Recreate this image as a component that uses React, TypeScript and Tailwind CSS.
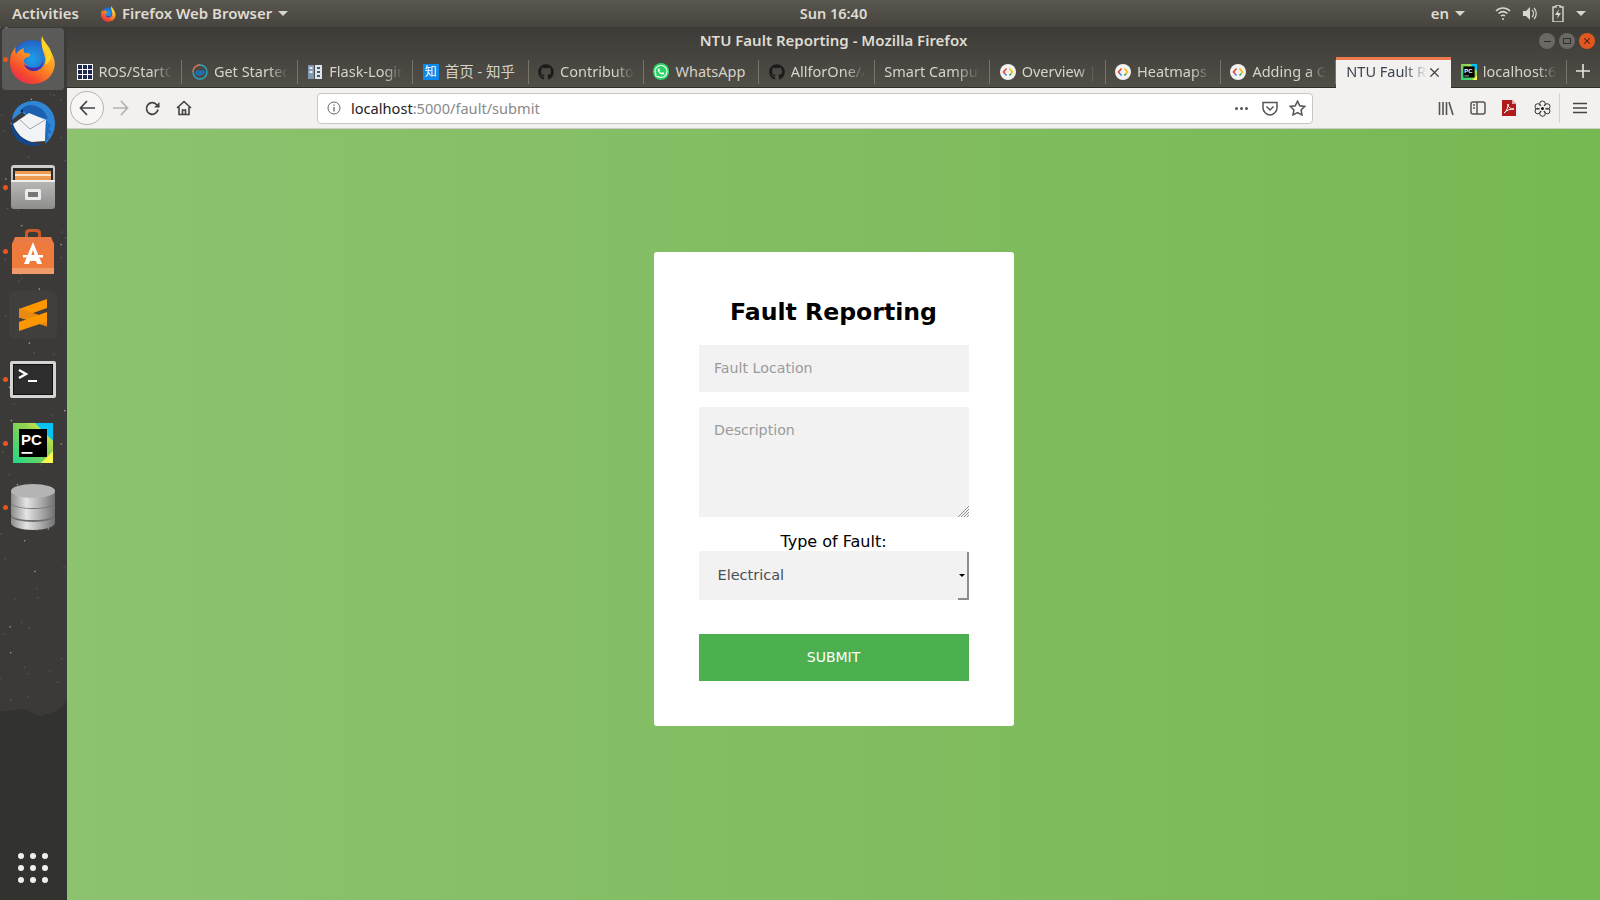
import { X } from "lucide-react";
import type { ReactNode } from "react";
import { FaGithub, FaWhatsapp } from "react-icons/fa";

function Firefox({ size = 52 }: { size?: number }) {
  return (
    <svg width={size} height={size} viewBox="0 0 52 52">
      <defs>
        <linearGradient id="ffo" x1="0.8" y1="0" x2="0.2" y2="1">
          <stop offset="0" stopColor="#ffe14a" />
          <stop offset="0.45" stopColor="#ff9a22" />
          <stop offset="0.8" stopColor="#f5482e" />
          <stop offset="1" stopColor="#e52b56" />
        </linearGradient>
        <radialGradient id="ffb" cx="0.5" cy="0.45" r="0.6">
          <stop offset="0" stopColor="#1d9fe8" />
          <stop offset="0.7" stopColor="#2468c9" />
          <stop offset="1" stopColor="#3b2a9a" />
        </radialGradient>
      </defs>
      <circle cx="25" cy="28" r="21" fill="url(#ffb)" />
      <path d="M35 3c1 6 3 8 7 13 5 7 7 13 5 20-3 10-12 15-22 15C12 51 3 41 3 29 3 22 6 17 9 14c-1 3-1 5 0 7 2-3 5-5 8-6-1 3 0 5 2 5 3 0 5 1 4 3-1 1-5 1-6 4-1 2 1 4 3 5-1 2 2 6 7 6 7 0 12-6 11-13-1-5-3-8-3-13 0-5 0-11 0-12z" fill="url(#ffo)" />
      <path d="M35 3c-1 5-1 9 2 14 3 6 3 11 1 15 5-3 7-8 6-13-1-6-7-9-9-16z" fill="#ffd426" />
      <path d="M17 31c3 3 9 5 14 3 3-1 5-4 5-7 1 6-4 11-10 11-4 0-8-3-9-7z" fill="#4b2aa8" />
    </svg>
  );
}

function Thunderbird() {
  return (
    <svg width="50" height="50" viewBox="0 0 50 50">
      <path d="M4 22C5 10 15 2 27 3c11 1 20 10 20 22 0 9-4 16-10 21 1-4 1-8-1-12L14 14z" fill="#2f86d6" />
      <path d="M4 22c-2 9 1 17 8 22 7 4 15 5 22 2-11 0-21-5-27-14z" fill="#12468f" />
      <path d="M14 11c3-4 9-5 14-3 6 2 10 7 12 13l-8-2-12-1z" fill="#1c5fae" />
      <path d="M5 26L21 15l17 7-1 21-13 1C15 42 8 35 5 26z" fill="#f2f3f5" />
      <path d="M11 21l11 10 15-9" fill="none" stroke="#9aa6b2" strokeWidth="1" />
      <path d="M38 22l5 5-2 4 3 3-4 2 1 5-4 2z" fill="#1e6fc0" />
      <circle cx="14" cy="13" r="1.4" fill="#0b2345" />
    </svg>
  );
}

function FilesIcon() {
  return (
    <svg width="46" height="46" viewBox="0 0 46 46">
      <defs>
        <linearGradient id="cab" x1="0" y1="0" x2="0" y2="1">
          <stop offset="0" stopColor="#d0d0ce" />
          <stop offset="1" stopColor="#8e8e8c" />
        </linearGradient>
      </defs>
      <rect x="1" y="1" width="44" height="44" rx="3" fill="url(#cab)" />
      <rect x="3" y="4" width="40" height="12" fill="#2c2a28" />
      <rect x="5" y="7" width="36" height="9" fill="#ee9b52" />
      <rect x="5" y="10" width="36" height="2" fill="#fbe5cc" />
      <rect x="1" y="16" width="44" height="2" fill="#efefed" />
      <rect x="15" y="25" width="16" height="11" rx="1.5" fill="#ececea" />
      <rect x="18" y="28" width="10" height="5" fill="#77777a" />
    </svg>
  );
}

function SoftwareIcon() {
  return (
    <svg width="44" height="46" viewBox="0 0 44 46">
      <path d="M14 10V5c0-3 2-4 4-4h8c2 0 4 1 4 4v5h-3V6c0-1-1-2-2-2h-6c-1 0-2 1-2 2v4z" fill="#c85a2a" />
      <path d="M4 9h36l3 7H1z" fill="#e87a45" />
      <rect x="1" y="15" width="42" height="31" fill="#ee7a3c" />
      <rect x="1" y="40" width="42" height="6" fill="#f09a6a" />
      <path d="M22 14l9 22h-5l-1-3h-6l-1 3h-5zM22 22l-2 6h4z" fill="#fff" />
      <rect x="12" y="27" width="20" height="2.5" fill="#fff" />
    </svg>
  );
}

function SublimeIcon() {
  return (
    <div className="flex h-[48px] w-[48px] items-center justify-center rounded-md bg-[#413f3d]">
      <svg width="30" height="34" viewBox="0 0 30 34">
        <path d="M1 11L29 1v9L1 20z" fill="#ff9800" />
        <path d="M1 10.5l28 9v9l-28-9z" fill="#e98a10" />
        <path d="M1 24L29 14v9.5L1 33z" fill="#ff9800" />
      </svg>
    </div>
  );
}

function TerminalIcon() {
  return (
    <div className="flex h-[37px] w-[46px] items-center justify-center rounded-[2px] bg-[#d4d4d2] p-[3px]">
      <div className="h-full w-full border border-[#111] bg-[#2e2e2e]">
        <svg width="38" height="29" viewBox="0 0 38 29">
          <path d="M5 5l7 4-7 4" fill="none" stroke="#fff" strokeWidth="2.4" />
          <rect x="14" y="15" width="9" height="2" fill="#fff" />
        </svg>
      </div>
    </div>
  );
}

function PyCharmIcon({ size = 40 }: { size?: number }) {
  return (
    <svg width={size} height={size} viewBox="0 0 40 40">
      <defs>
        <linearGradient id="pcg" x1="0" y1="1" x2="1" y2="0">
          <stop offset="0" stopColor="#21d789" />
          <stop offset="0.6" stopColor="#8fd14f" />
          <stop offset="1" stopColor="#fcf84a" />
        </linearGradient>
      </defs>
      <rect width="40" height="40" fill="url(#pcg)" />
      <path d="M22 0h18v18z" fill="#07c3f2" />
      <path d="M40 28v12H28z" fill="#fcf84a" />
      <rect x="6" y="6" width="28" height="28" fill="#000" />
      <text x="8" y="22" fill="#fff" fontSize="15" fontWeight="700" fontFamily="'Liberation Sans', sans-serif">PC</text>
      <rect x="8.5" y="29" width="11" height="1.8" fill="#fff" />
    </svg>
  );
}

function DatabaseIcon() {
  return (
    <svg width="46" height="48" viewBox="0 0 46 48">
      <defs>
        <linearGradient id="dbg" x1="0" y1="0" x2="1" y2="0">
          <stop offset="0" stopColor="#8c8c8c" />
          <stop offset="0.35" stopColor="#e4e4e4" />
          <stop offset="0.7" stopColor="#a8a8a8" />
          <stop offset="1" stopColor="#707070" />
        </linearGradient>
      </defs>
      <path d="M1 34v6c0 4 10 7 22 7s22-3 22-7v-6z" fill="url(#dbg)" />
      <ellipse cx="23" cy="33" rx="22" ry="6" fill="#6f6f6f" />
      <path d="M1 20v11c0 4 10 6 22 6s22-2 22-6V20z" fill="url(#dbg)" />
      <ellipse cx="23" cy="20" rx="22" ry="6" fill="#6f6f6f" />
      <path d="M1 8v11c0 4 10 6 22 6s22-2 22-6V8z" fill="url(#dbg)" />
      <ellipse cx="23" cy="8" rx="22" ry="7" fill="#b4b4b4" />
    </svg>
  );
}

function DockItem({ running, active, children }: { running?: boolean; active?: boolean; children: ReactNode }) {
  return (
    <div className="relative flex h-16 w-full items-center justify-center">
      {running && <span className="absolute left-[3px] top-[30px] h-[5px] w-[5px] rounded-full bg-[#e9541f]" />}
      <div className={`-ml-[1px] flex h-[62px] w-[62px] items-center justify-center rounded-[4px] ${active ? "bg-[#5a5a58]" : ""}`}>
        {children}
      </div>
    </div>
  );
}

function Dock() {
  // scattered speckles for the wallpaper showing through the dock
  const specks = [...new Array(110)].map((_, indx) => {
    const a = Math.sin(indx * 12.9898) * 43758.5453;
    const b = Math.sin(indx * 78.233) * 12543.1234;
    return {
      x: (a - Math.floor(a)) * 66,
      y: (b - Math.floor(b)) * 680,
      fill: indx % 4 === 0 ? "#a5a19a" : "#5f5c58",
    };
  });
  return (
    <aside className="relative flex w-[67px] shrink-0 flex-col bg-[#32322f]">
      <svg className="absolute left-0 top-0" width="67" height="720" viewBox="0 0 67 720">
        <path d="M0 0h67v673c-4 6-9 11-14 12-4 1-8 3-12 4-3 1-5-4-7-2-3 0-6-5-12-5-7 0-14 3-22 2z" fill="#3b3a38" />
        {specks.map((speck, indx) => (
          <circle key={indx} cx={speck.x} cy={speck.y} r="0.8" fill={speck.fill} />
        ))}
      </svg>
      <div className="relative flex h-full flex-col">
        <DockItem running active><Firefox /></DockItem>
        <DockItem><Thunderbird /></DockItem>
        <DockItem running><FilesIcon /></DockItem>
        <DockItem running><SoftwareIcon /></DockItem>
        <DockItem><SublimeIcon /></DockItem>
        <DockItem running><TerminalIcon /></DockItem>
        <DockItem running><PyCharmIcon /></DockItem>
        <DockItem running><DatabaseIcon /></DockItem>
        <div className="mb-[17px] -ml-[1px] mt-auto grid grid-cols-3 gap-[6px] self-center">
          {[...new Array(9)].map((_, indx) => (
            <span key={indx} className="h-[6px] w-[6px] rounded-full bg-[#f0f0ee]" />
          ))}
        </div>
      </div>
    </aside>
  );
}

function Caret({ className = "" }: { className?: string }) {
  return <span className={`inline-block h-0 w-0 border-x-[5px] border-t-[5px] border-x-transparent border-t-[#d8d6d0] ${className}`} />;
}

function TopBar() {
  return (
    <header className="relative flex h-[27px] shrink-0 items-center bg-gradient-to-b from-[#5a574f] to-[#46443e] font-['Noto_Sans',sans-serif] text-[15px] font-semibold text-[#dfdbd2]">
      <span className="ml-3">Activities</span>
      <span className="ml-[21px] flex items-center gap-[5px]">
        <Firefox size={17} />
        Firefox Web Browser
        <Caret className="ml-[1px]" />
      </span>
      <span className="absolute left-[67px] right-0 text-center text-[14.5px]">Sun 16:40</span>
      <div className="ml-auto flex items-center">
        <span>en</span>
        <Caret className="ml-[6px]" />
        <svg className="ml-[30px]" width="16" height="15" viewBox="0 0 16 15" fill="none" stroke="#d8d6d0" strokeWidth="1.5">
          <path d="M1 5c4-4 10-4 14 0M3.5 7.5c3-2.5 6-2.5 9 0M6 10c1.3-1 2.7-1 4 0" />
          <circle cx="8" cy="13" r="1" fill="#d8d6d0" stroke="none" />
        </svg>
        <svg className="ml-[11px]" width="16" height="15" viewBox="0 0 16 15" fill="#d8d6d0">
          <path d="M1 5h3l4-4v13l-4-4H1z" />
          <path d="M10 4c2 2 2 5 0 7M12 2c3 3 3 8 0 11" fill="none" stroke="#d8d6d0" strokeWidth="1.2" />
        </svg>
        <svg className="ml-[14px]" width="12" height="17" viewBox="0 0 12 17">
          <path d="M4 0h4v2h3v15H1V2h3z" fill="none" stroke="#d8d6d0" strokeWidth="1.4" />
          <path d="M7 4L3 10h3l-1 4 4-6H6z" fill="#d8d6d0" />
        </svg>
        <Caret className="ml-[12px] mr-[14px]" />
      </div>
    </header>
  );
}

function GoogleDevIcon() {
  return (
    <svg width="16" height="16" viewBox="0 0 16 16">
      <circle cx="8" cy="8" r="8" fill="#f2f2f0" />
      <path d="M6.5 4.5L3.5 8l1.5 1.8" fill="none" stroke="#ea4335" strokeWidth="1.6" />
      <path d="M5 9.8l1.5 1.7" fill="none" stroke="#4285f4" strokeWidth="1.6" />
      <path d="M9.5 4.5l3 3.5-1.5 1.8" fill="none" stroke="#fbbc05" strokeWidth="1.6" />
      <path d="M11 9.8l-1.5 1.7" fill="none" stroke="#34a853" strokeWidth="1.6" />
    </svg>
  );
}

const tabs: { title: string; icon?: ReactNode; plain?: boolean }[] = [
  {
    title: "ROS/StartGuide",
    icon: (
      <svg width="16" height="16" viewBox="0 0 16 16">
        <rect width="16" height="16" fill="#fff" />
        {[1, 6, 11].flatMap((y) =>
          [1, 6, 11].map((x) => <rect key={`${x}-${y}`} x={x} y={y} width="4" height="4" fill="#1d2a50" />),
        )}
      </svg>
    ),
  },
  {
    title: "Get Started",
    icon: (
      <svg width="16" height="16" viewBox="0 0 16 16">
        <circle cx="8" cy="8" r="7" fill="none" stroke="#27a9c9" strokeWidth="1.3" />
        <path d="M1 8a7 7 0 0 1 7-7" fill="none" stroke="#e8663c" strokeWidth="1.3" />
        <path d="M3 9c2-3 3-4 5-2 2-2 4-1 5 1-1 4-9 5-10 1z" fill="#1e6fb5" />
      </svg>
    ),
  },
  {
    title: "Flask-Login",
    icon: (
      <svg width="16" height="16" viewBox="0 0 16 16">
        <rect x="1" y="1" width="6" height="14" fill="#7f97b5" />
        <rect x="8" y="1" width="7" height="14" fill="#dfe5ec" />
        <rect x="2.5" y="3" width="3" height="2" fill="#e6ebf0" />
        <rect x="2.5" y="7" width="3" height="2" fill="#e6ebf0" />
        <rect x="10" y="3" width="3" height="2" fill="#3f5a7d" />
        <rect x="10" y="7" width="3" height="2" fill="#3f5a7d" />
        <rect x="10" y="11" width="3" height="2" fill="#3f5a7d" />
      </svg>
    ),
  },
  {
    title: "首页 - 知乎",
    plain: true,
    icon: (
      <span className="flex h-4 w-4 items-center justify-center bg-[#0f88eb] text-[12px] leading-none text-white">知</span>
    ),
  },
  { title: "Contributor", icon: <FaGithub size={16} className="text-[#1b1b1b]" /> },
  { title: "WhatsApp", plain: true, icon: <FaWhatsapp size={17} className="rounded-full bg-[#2bd366] p-[1px] text-white" /> },
  { title: "AllforOne/AllforOne", icon: <FaGithub size={16} className="text-[#1b1b1b]" /> },
  { title: "Smart Campus Map" },
  { title: "Overview | Maps", icon: <GoogleDevIcon /> },
  { title: "Heatmaps", icon: <GoogleDevIcon /> },
  { title: "Adding a Google", icon: <GoogleDevIcon /> },
];

function Tab({ title, icon, plain }: { title: string; icon?: ReactNode; plain?: boolean }) {
  return (
    <div className="flex h-[31px] w-[115.4px] shrink-0 items-center pb-[2px]">
      <div className="flex h-[24px] w-full items-center gap-[6px] overflow-hidden border-r border-[#77746c] pl-[9.5px] pr-[9px]">
        {icon && <span className="flex w-4 shrink-0 items-center justify-center">{icon}</span>}
        <span className={`min-w-0 flex-1 overflow-hidden whitespace-nowrap text-[#d6d3cb] ${plain ? "" : "[mask-image:linear-gradient(to_right,black_74%,transparent)]"}`}>
          {title}
        </span>
      </div>
    </div>
  );
}

function TabStrip() {
  return (
    <div className="flex h-[31px] shrink-0 items-stretch border-b border-[#2e2d2a] font-['Noto_Sans','Noto_Sans_CJK_SC',sans-serif] text-[14.5px]">
      {tabs.map((tab) => (
        <Tab key={tab.title} {...tab} />
      ))}
      <div className="z-10 flex h-[31px] w-[115px] shrink-0 items-center border-t-[3px] border-[#ee7a50] bg-[#f2f1ef] pb-[4px] pl-[10px] pr-[9px] text-[#3b4450]">
        <span className="min-w-0 flex-1 overflow-hidden whitespace-nowrap [mask-image:linear-gradient(to_right,black_72%,transparent)]">
          NTU Fault Reporting
        </span>
        <X size={15} strokeWidth={2} className="text-[#444]" />
      </div>
      <Tab title="localhost:63342" icon={<PyCharmIcon size={16} />} />
      <div className="flex flex-1 items-center justify-center pb-[2px] text-[#e6e3dc]">
        <svg width="14" height="14" viewBox="0 0 14 14" stroke="currentColor" strokeWidth="1.6">
          <path d="M7 0v14M0 7h14" />
        </svg>
      </div>
    </div>
  );
}

function Toolbar() {
  return (
    <div className="flex h-[41px] shrink-0 items-center border-b border-[#cfcdca] bg-[#f2f1ef] text-[#4b4b4b]">
      <div className="ml-[3px] flex h-[34px] w-[34px] items-center justify-center rounded-full border border-[#b5b3b0] bg-[#f7f6f5]">
        <svg width="17" height="16" viewBox="0 0 17 16" fill="none" stroke="#444" strokeWidth="1.7">
          <path d="M8 1L1.5 8 8 15M1.5 8H16" />
        </svg>
      </div>
      <svg className="ml-[8px]" width="17" height="16" viewBox="0 0 17 16" fill="none" stroke="#b4b3b1" strokeWidth="1.7">
        <path d="M9 1l6.5 7L9 15M15.5 8H1" />
      </svg>
      <svg className="ml-[16px]" width="15" height="15" viewBox="0 0 15 15" fill="none" stroke="#444" strokeWidth="1.7">
        <path d="M13 8.5A5.8 5.8 0 1 1 11.5 3.5L14 6" />
        <path d="M14.5 1v5.500H9z" fill="#444" stroke="none" />
      </svg>
      <svg className="ml-[16px]" width="16" height="16" viewBox="0 0 16 16" fill="none" stroke="#444" strokeWidth="1.6">
        <path d="M1 8l7-6.500L15 8M3 7v7.500h10V7" />
        <path d="M6.5 14.5V10h3v4.500" />
      </svg>
      <div className="ml-[125px] flex h-[31px] w-[996px] items-center rounded-[4px] border border-[#c9c7c4] bg-white">
        <svg className="ml-[9px]" width="14" height="14" viewBox="0 0 14 14" fill="none" stroke="#666" strokeWidth="1">
          <circle cx="7" cy="7" r="6" />
          <path d="M7 6v4.500M7 3.500v1.300" strokeWidth="1.3" />
        </svg>
        <span className="ml-[10px] flex-1 pt-[1px] font-['Noto_Sans',sans-serif] text-[14.6px] text-[#222]">
          localhost<span className="text-[#8a8a8a]">:5000/fault/submit</span>
        </span>
        <span className="flex gap-[2px]">
          <span className="h-[3px] w-[3px] rounded-full bg-[#555]" />
          <span className="h-[3px] w-[3px] rounded-full bg-[#555]" />
          <span className="h-[3px] w-[3px] rounded-full bg-[#555]" />
        </span>
        <svg className="ml-[14px]" width="16" height="15" viewBox="0 0 16 15" fill="none" stroke="#555" strokeWidth="1.5">
          <path d="M1 1.5h14V7c0 4-4 7-7 7S1 11 1 7z" />
          <path d="M4.5 5.5L8 9l3.5-3.5" />
        </svg>
        <svg className="ml-[11px] mr-[6px]" width="17" height="16" viewBox="0 0 17 16" fill="none" stroke="#555" strokeWidth="1.5">
          <path d="M8.5 1.2l2.2 4.500 5 .7-3.600 3.500.9 5-4.500-2.400L4 14.900l.9-5L1.300 6.400l5-.7z" />
        </svg>
      </div>
      <svg className="ml-[125px]" width="16" height="15" viewBox="0 0 16 15" stroke="#555" strokeWidth="1.6" fill="none">
        <path d="M1.5 1v13M5 1v13M8.5 1v13M11 1l4 13" />
      </svg>
      <svg className="ml-[16px]" width="16" height="14" viewBox="0 0 16 14" stroke="#555" strokeWidth="1.5" fill="none">
        <rect x="1" y="1" width="14" height="12" rx="2" />
        <path d="M7 1v12M3 4h2M3 7h2" />
      </svg>
      <svg className="ml-[16px]" width="14" height="16" viewBox="0 0 14 16">
        <path d="M0 0h10l4 4v12H0z" fill="#b01c1c" />
        <path d="M10 0l4 4h-4z" fill="#e6a9a9" />
        <path d="M2 13c3-2 4-6 4-9 0 3 2 5 6 5-4 0-7 1-10 4z" fill="none" stroke="#fff" strokeWidth="1" />
      </svg>
      <svg className="ml-[18px]" width="17" height="17" viewBox="0 0 17 17" fill="none" stroke="#333" strokeWidth="1">
        <circle cx="8.5" cy="3.8" r="2.8" />
        <circle cx="13.2" cy="6.5" r="2.8" />
        <circle cx="13.2" cy="11" r="2.8" />
        <circle cx="8.5" cy="13.5" r="2.8" />
        <circle cx="3.8" cy="11" r="2.8" />
        <circle cx="3.8" cy="6.5" r="2.8" />
        <circle cx="8.5" cy="8.5" r="3" fill="#f2f1ef" stroke="none" />
        <circle cx="8.5" cy="8.5" r="1.5" fill="#111" stroke="none" />
      </svg>
      <span className="ml-[8px] h-[30px] w-px bg-[#d4d2cf]" />
      <svg className="ml-[13px]" width="14" height="12" viewBox="0 0 14 12" stroke="#444" strokeWidth="1.6">
        <path d="M0 1.5h14M0 6h14M0 10.5h14" />
      </svg>
    </div>
  );
}

function FaultForm() {
  const fieldClass =
    "block w-full bg-[#f2f2f2] pl-[15.5px] pr-[15px] text-[14.2px] text-[#333] outline-none placeholder:text-[#9a9a9a]";
  return (
    <form className="w-[360px] rounded-[3px] bg-white px-[45px] pb-[45px] pt-[46px] text-center font-['DejaVu_Sans',sans-serif] text-black">
      <h2 className="mb-[19px] text-[23.6px] font-bold leading-[28px]">Fault Reporting</h2>
      <input className={`${fieldClass} h-[47px] pb-[2px]`} placeholder="Fault Location" />
      <div className="relative mt-[15px]">
        <textarea className={`${fieldClass} h-[110px] resize-none pb-[13px] pt-[13px]`} placeholder="Description" />
        <svg className="absolute bottom-0 right-0" width="11" height="11" viewBox="0 0 11 11" stroke="#777" strokeWidth="0.8">
          <path d="M0 11L11 0M3 11l8-8M6 11l5-5M9 11l2-2" />
        </svg>
      </div>
      <label className="mt-[15px] block text-[16px] leading-[19px]">Type of Fault:</label>
      <div className="relative">
        <select className="block h-[49px] w-full appearance-none rounded-none bg-[#f2f2f2] px-[19px] text-[14.5px] text-[#4a4f55] outline-none">
          <option>Electrical</option>
          <option>Plumbing</option>
          <option>Others</option>
        </select>
        <span className="absolute right-[4px] top-[23px] h-0 w-0 border-x-[3px] border-t-[3px] border-x-transparent border-t-black" />
        <span className="absolute bottom-0 right-0 h-[48px] w-[2px] bg-[#8c8c8c]" />
        <span className="absolute bottom-0 right-0 h-[2px] w-[11px] bg-[#8c8c8c]" />
      </div>
      <button type="button" className="mt-[34px] block h-[47px] w-full bg-[#4caf50] text-[14px] text-white">
        SUBMIT
      </button>
    </form>
  );
}

export default function App() {
  return (
    <div className="flex h-[900px] w-[1600px] flex-col overflow-hidden bg-[#32322f]">
      <TopBar />
      <div className="flex min-h-0 flex-1">
        <Dock />
        <div className="flex min-w-0 flex-1 flex-col">
          <div className="bg-gradient-to-b from-[#3c3b37] to-[#514e47]">
            <div className="relative flex h-[30px] items-center justify-center pb-[4px] font-['Noto_Sans',sans-serif] text-[15px] font-semibold text-[#dfdbd2]">
              NTU Fault Reporting - Mozilla Firefox
              <div className="absolute right-[5px] top-[6px] flex gap-[4px]">
                <span className="flex h-4 w-4 items-center justify-center rounded-full bg-[#6b6964]">
                  <span className="h-px w-[7px] bg-[#2e2d2a]" />
                </span>
                <span className="flex h-4 w-4 items-center justify-center rounded-full bg-[#6b6964]">
                  <span className="h-[6px] w-[8px] border border-[#2e2d2a]" />
                </span>
                <span className="flex h-4 w-4 items-center justify-center rounded-full bg-[#e2561f]">
                  <X size={10} strokeWidth={2.5} className="text-[#3a2418]" />
                </span>
              </div>
            </div>
            <TabStrip />
          </div>
          <Toolbar />
          <main className="flex flex-1 items-start justify-center bg-gradient-to-l from-[#76b852] to-[#8dc26f] pt-[123px]">
            <FaultForm />
          </main>
        </div>
      </div>
    </div>
  );
}
